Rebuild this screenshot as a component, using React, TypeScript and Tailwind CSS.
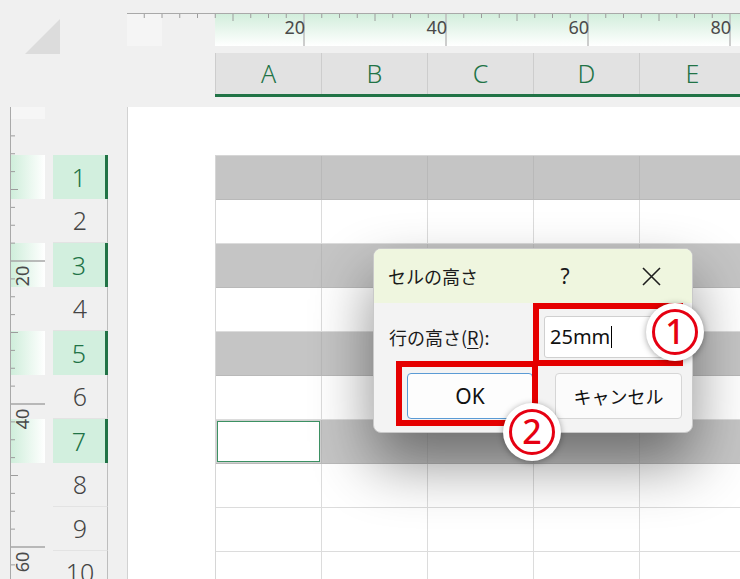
import React from 'react';

const cols = ['A', 'B', 'C', 'D', 'E'];
const rows = [1, 2, 3, 4, 5, 6, 7, 8, 9, 10];
const isHl = (r: number) => r % 2 === 1 && r <= 7;

const TopRuler: React.FC = () => {
    const ticks: { x: number; kind: 'major' | 'mid' | 'small' }[] = [];
    for (let k = -9; k <= 25; k++) {
        const x = 177 + 17.75 * k;
        if (x < 15 || x > 613) continue;
        const m = ((k % 8) + 8) % 8;
        ticks.push({ x, kind: m === 0 && x > 80 ? 'major' : m === 4 ? 'mid' : 'small' });
    }
    return (
        <div className="relative h-[33px] border-t border-[#a9a9a9] flex">
            <div className="w-[88px] shrink-0 flex">
                <div className="w-[35px] bg-[#f5f5f5]" />
            </div>
            <div className="flex-1 bg-linear-to-b from-[#d2eedc] to-white" />
            <svg className="absolute inset-0" width="613" height="32">
                {ticks.map(t =>
                    t.kind === 'major' ? (
                        <line key={t.x} x1={t.x} x2={t.x} y1={0} y2={32} stroke="#bdbdbd" strokeWidth="1.5" />
                    ) : (
                        <line key={t.x} x1={t.x} x2={t.x} y1={0} y2={t.kind === 'mid' ? 7 : 4} stroke="#9c9c9c" strokeWidth="1" />
                    )
                )}
            </svg>
            {[20, 40, 60, 80].map((n, i) => (
                <span
                    key={n}
                    className="absolute top-[4px] text-[18px] leading-none text-[#4a4a4a] font-['Noto_Sans',sans-serif]"
                    style={{ right: 613 - (177 + 142 * i) + 4 }}
                >
                    {n}
                </span>
            ))}
        </div>
    );
};

const LeftRuler: React.FC = () => {
    const ticks: { y: number; kind: 'major' | 'mid' | 'small' }[] = [];
    for (let k = -8; k <= 20; k++) {
        const y = 154 + 17.875 * k;
        if (y < 14 || y > 472) continue;
        const m = ((k % 8) + 8) % 8;
        ticks.push({ y, kind: m === 0 ? 'major' : m === 4 ? 'mid' : 'small' });
    }
    return (
        <div className="relative w-[35px] ml-[10px] border-l border-[#a9a9a9] shrink-0">
            <div className="h-[12px] bg-[#f6f6f6]" />
            <div className="mt-[36px] flex flex-col">
                {rows.map(r => (
                    <div key={r} className={isHl(r) ? 'h-[44px] bg-linear-to-r from-[#cfeedb] to-white' : 'h-[44px]'} />
                ))}
            </div>
            <svg className="absolute inset-0" width="34" height="472">
                {ticks.map(t =>
                    t.kind === 'major' ? (
                        <line key={t.y} x1={0} x2={34} y1={t.y} y2={t.y} stroke="#a6a6a6" strokeWidth="1.5" />
                    ) : (
                        <line key={t.y} x1={0} x2={t.kind === 'mid' ? 7 : 4} y1={t.y} y2={t.y} stroke="#9c9c9c" strokeWidth="1" />
                    )
                )}
            </svg>
            {[20, 40, 60].map((n, i) => (
                <div
                    key={n}
                    className="absolute left-[3px] w-[16px] h-[26px] flex items-center justify-center"
                    style={{ top: 154 + 143 * i + 2 }}
                >
                    <span className="inline-block -rotate-90 text-[18px] leading-none text-[#4a4a4a] font-['Noto_Sans',sans-serif]">{n}</span>
                </div>
            ))}
        </div>
    );
};

const Circled: React.FC<{ n: string; className: string }> = ({ n, className }) => (
    <div className={`absolute w-[58px] h-[58px] rounded-full bg-white shadow-[0_1px_6px_rgba(0,0,0,0.35)] flex items-center justify-center ${className}`}>
        <div className="w-[46px] h-[46px] rounded-full border-[3px] border-[#e60012] flex items-center justify-center">
            <span className="text-[34px] leading-none text-[#e60012] font-medium font-['Noto_Sans',sans-serif] -mt-[2px]">{n}</span>
        </div>
    </div>
);

const App: React.FC = () => {
    return (
        <div className="relative w-[740px] h-[579px] overflow-hidden bg-[#f0f0f0] flex flex-col font-['Noto_Sans','Noto_Sans_CJK_JP',sans-serif]">
            {/* top band */}
            <div className="flex h-[107px] shrink-0">
                <div className="w-[127px] shrink-0 pl-[25px] pt-[19px]">
                    <svg width="35" height="35" viewBox="0 0 35 35">
                        <path d="M35 0 L35 35 L0 35 Z" fill="#dcdcdc" />
                    </svg>
                </div>
                <div className="flex-1 flex flex-col pt-[13px]">
                    <TopRuler />
                    <div className="mt-[7px] ml-[88px] flex h-[44px] border-b-[3px] border-[#217346] bg-[#e2e2e2]">
                        {cols.map(c => (
                            <div key={c} className="w-[106px] shrink-0 border-l border-[#cdcdcd] flex items-center justify-center text-[25px] leading-none text-[#217346] font-light">
                                {c}
                            </div>
                        ))}
                    </div>
                </div>
            </div>

            {/* body band */}
            <div className="flex flex-1 min-h-0">
                <div className="w-[127px] shrink-0 flex">
                    <LeftRuler />
                    <div className="ml-[8px] w-[55px] shrink-0 pt-[48px] flex flex-col">
                        {rows.map(r => (
                            <div
                                key={r}
                                className={
                                    isHl(r)
                                        ? 'h-[44px] shrink-0 bg-[#d2efde] border-r-[3px] border-[#217346] flex items-center justify-center text-[25px] leading-none text-[#217346] font-light'
                                        : 'h-[44px] shrink-0 border-r border-b border-r-[#bdbdbd] border-b-[#e3e3e3] flex items-center justify-center text-[25px] leading-none text-[#444] font-light'
                                }
                            >
                                {r}
                            </div>
                        ))}
                    </div>
                </div>
                <div className="flex-1 bg-white border-l border-[#d2d2d2] pt-[48px] pl-[87px]">
                    <div className="border-t border-l border-[#d6d6d6] flex flex-col">
                        {rows.map(r => (
                            <div key={r} className="flex h-[44px] shrink-0">
                                {cols.map((c, i) =>
                                    r === 7 && i === 0 ? (
                                        <div key={c} className="w-[106px] shrink-0 bg-[#d0d0d0] p-[1px] border-r border-b border-[#b9b9b9]">
                                            <div className="h-full bg-white border-[1.5px] border-[#3c9163]" />
                                        </div>
                                    ) : (
                                        <div
                                            key={c}
                                            className={
                                                isHl(r)
                                                    ? 'w-[106px] shrink-0 bg-[#c5c5c5] border-r border-b border-[#b9b9b9]'
                                                    : 'w-[106px] shrink-0 bg-white border-r border-b border-[#dcdcdc]'
                                            }
                                        />
                                    )
                                )}
                            </div>
                        ))}
                    </div>
                </div>
            </div>

            {/* dialog */}
            <div className="absolute left-[373px] top-[248px] w-[320px] h-[185px] rounded-[8px] bg-[#f3f3f3] border border-[#c9c9c9] shadow-[0_30px_60px_rgba(0,0,0,0.45)] overflow-hidden flex flex-col">
                <div className="h-[54px] shrink-0 bg-[#eff6df] flex items-center">
                    <div className="pl-[14px] w-[168px] text-[18px] leading-none text-[#1a1a1a] font-['Noto_Sans_CJK_JP',sans-serif]">セルの高さ</div>
                    <div className="w-[46px] text-center text-[21px] leading-none text-[#1a1a1a] font-['Noto_Sans',sans-serif]">?</div>
                    <div className="ml-[40px] w-[46px] flex justify-center">
                        <svg width="19" height="19" viewBox="0 0 19 19">
                            <path d="M1 1 L18 18 M18 1 L1 18" stroke="#1e1e1e" strokeWidth="1.6" fill="none" />
                        </svg>
                    </div>
                </div>
                <div className="flex items-center pt-[13px]">
                    <div className="pl-[15px] w-[170px] text-[18px] leading-none text-[#1a1a1a] font-['Noto_Sans_CJK_JP',sans-serif]">
                        行の高さ(<span className="underline underline-offset-[3px]">R</span>):
                    </div>
                    <div className="w-[140px] h-[42px] bg-white border border-[#d0d0d0] rounded-[3px] flex items-center pl-[5px]">
                        <span className="text-[20px] leading-none text-[#111] font-['Noto_Sans',sans-serif]">25mm</span>
                        <span className="ml-[1px] w-[1px] h-[22px] bg-black" />
                    </div>
                </div>
                <div className="flex pt-[15px] pl-[33px] gap-[22px]">
                    <div className="w-[126px] h-[46px] rounded-[4px] bg-[#fdfdfd] border border-[#5b9bd5] flex items-center justify-center text-[21px] leading-none text-[#111] font-['Noto_Sans',sans-serif]">
                        OK
                    </div>
                    <div className="w-[127px] h-[46px] rounded-[4px] bg-[#fbfbfb] border border-[#d6d6d6] flex items-center justify-center text-[18px] leading-none text-[#111] font-['Noto_Sans_CJK_JP',sans-serif]">
                        キャンセル
                    </div>
                </div>
            </div>

            {/* annotation frames */}
            <div className="absolute left-[533px] top-[303px] w-[150px] h-[63px] border-[6px] border-[#e50000]" />
            <div className="absolute left-[396px] top-[361px] w-[142px] h-[65px] border-[6px] border-[#e50000]" />

            <Circled n="1" className="left-[646px] top-[303px]" />
            <Circled n="2" className="left-[503px] top-[403px]" />
        </div>
    );
};

export default App;
